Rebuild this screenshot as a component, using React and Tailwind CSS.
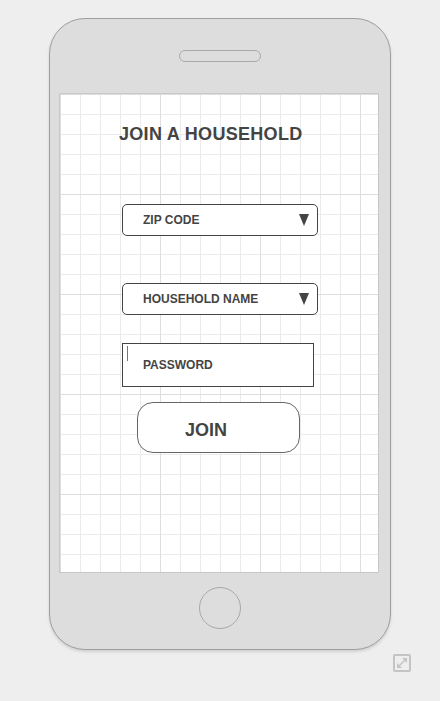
const Caret = () => (
    <svg width="10" height="12" viewBox="0 0 10 12" className="shrink-0">
        <polygon points="0,0 10,0 5,12" fill="#444" />
    </svg>
);

function Dropdown({ label }) {
    return (
        <div className="ml-[62px] flex h-[32px] w-[196px] items-center justify-between rounded-[5px] border border-[#444] bg-white pl-[20px] pr-[8px]">
            <span className="text-[12px] font-bold text-[#444]">{label}</span>
            <Caret />
        </div>
    );
}

export default function App() {
    return (
        <div className="min-h-screen bg-[#eeeeee] pt-[18px] font-['Liberation_Sans',Arial,sans-serif]">
            {/* phone body */}
            <div className="mx-auto flex h-[632px] w-[342px] flex-col items-center rounded-[36px] border border-[#9e9e9e] bg-[#dddddd] shadow-[0_2px_3px_rgba(0,0,0,0.12)]">
                <div className="mt-[31px] h-[12px] w-[82px] rounded-full border border-[#a8a8a8]" />

                {/* screen */}
                <div className="mt-[31px] -translate-x-[1px] flex h-[480px] w-[320px] flex-col items-start border border-[#c8c8c8] bg-white bg-[linear-gradient(to_right,#dedede_1px,transparent_1px),linear-gradient(to_bottom,#dedede_1px,transparent_1px),linear-gradient(to_right,#ebebeb_1px,transparent_1px),linear-gradient(to_bottom,#ebebeb_1px,transparent_1px)] bg-[size:100px_100px,100px_100px,20px_20px,20px_20px]">
                    <h1 className="ml-[59px] mt-[30px] text-[18px] font-bold leading-[20px] tracking-[0.3px] text-[#444]">
                        JOIN A HOUSEHOLD
                    </h1>

                    <div className="mt-[60px]">
                        <Dropdown label="ZIP CODE" />
                    </div>
                    <div className="mt-[47px]">
                        <Dropdown label="HOUSEHOLD NAME" />
                    </div>

                    <div className="relative ml-[62px] mt-[28px] flex h-[44px] w-[192px] items-center border border-[#444] bg-white pl-[20px]">
                        <span className="absolute left-[4px] top-[2px] h-[15px] w-[1px] bg-[#777]" />
                        <span className="text-[12px] font-bold text-[#444]">PASSWORD</span>
                    </div>

                    <button className="ml-[77px] mt-[15px] flex h-[51px] w-[163px] items-center rounded-[16px] border border-[#666] bg-white pl-[47px] pt-[6px] text-[18px] font-bold text-[#444]">
                        JOIN
                    </button>
                </div>

                <div className="mt-[14px] h-[42px] w-[42px] rounded-full border border-[#a8a8a8]" />
            </div>

            <div className="mt-[4px] pl-[393px]">
                <svg width="18" height="18" viewBox="0 0 18 18">
                    <rect x="1" y="1" width="16" height="16" rx="1" fill="none" stroke="#c4c4c4" strokeWidth="2" />
                    <line x1="6" y1="12" x2="12" y2="6" stroke="#c4c4c4" strokeWidth="1.5" />
                    <polygon points="9,4 14,4 14,9" fill="#c4c4c4" />
                    <polygon points="4,9 4,14 9,14" fill="#c4c4c4" />
                </svg>
            </div>
        </div>
    );
}
